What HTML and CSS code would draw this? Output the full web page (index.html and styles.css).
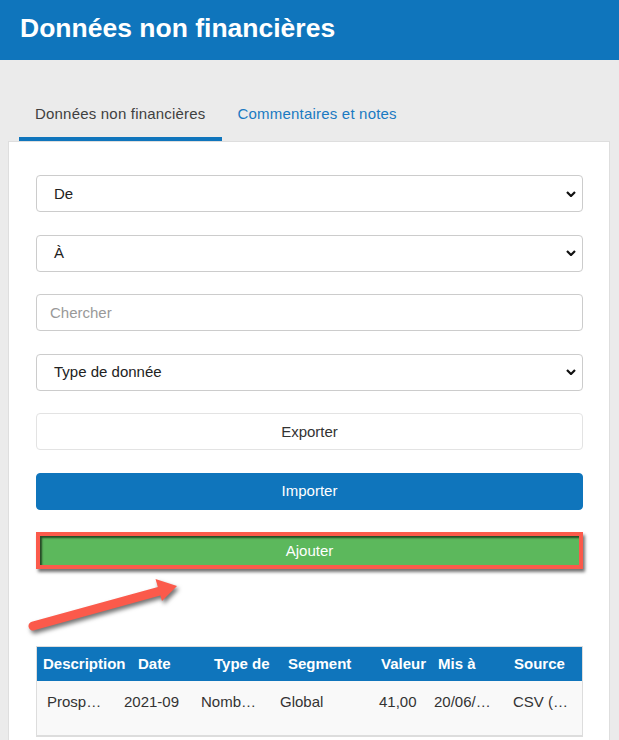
FILE: index.html
```html
<!DOCTYPE html>
<html lang="fr">
<head>
<meta charset="utf-8">
<title>Données non financières</title>
<link rel="stylesheet" href="styles.css">
</head>
<body>
<header class="topbar">
  <h1 class="title">Données non financières</h1>
</header>
<main class="page">
  <nav class="tabs">
    <a class="tab active">Données non financières</a>
    <a class="tab">Commentaires et notes</a>
  </nav>
  <section class="card">
    <div class="form">
      <div class="field"><span>De</span><svg class="chev" viewBox="0 0 10 6" width="10" height="6"><polyline points="1,1 5,5 9,1" fill="none" stroke="#111" stroke-width="2.2"/></svg></div>
      <div class="field"><span>À</span><svg class="chev" viewBox="0 0 10 6" width="10" height="6"><polyline points="1,1 5,5 9,1" fill="none" stroke="#111" stroke-width="2.2"/></svg></div>
      <input class="field search" type="text" placeholder="Chercher">
      <div class="field"><span>Type de donnée</span><svg class="chev" viewBox="0 0 10 6" width="10" height="6"><polyline points="1,1 5,5 9,1" fill="none" stroke="#111" stroke-width="2.2"/></svg></div>
      <button class="btn btn-export">Exporter</button>
      <button class="btn btn-import">Importer</button>
      <button class="btn btn-add">Ajouter</button>
    </div>
    <svg class="arrow" viewBox="20 570 170 70" width="170" height="70">
      <line x1="33" y1="626" x2="160" y2="591" stroke="#fb5a4b" stroke-width="9" stroke-linecap="round"/>
      <polygon points="155.5,579 177,586 162,601" fill="#fb5a4b"/>
    </svg>
    <div class="table">
      <div class="thead">
        <div class="th">Description</div>
        <div class="th">Date</div>
        <div class="th">Type de</div>
        <div class="th">Segment</div>
        <div class="th">Valeur</div>
        <div class="th">Mis à</div>
        <div class="th">Source</div>
      </div>
      <div class="trow">
        <div class="td">Prosp…</div>
        <div class="td">2021-09</div>
        <div class="td">Nomb…</div>
        <div class="td">Global</div>
        <div class="td">41,00</div>
        <div class="td">20/06/…</div>
        <div class="td">CSV (…</div>
      </div>
    </div>
  </section>
</main>
</body>
</html>
```

FILE: styles.css
```css
* { box-sizing: border-box; }
html, body { margin: 0; padding: 0; }
body {
  font-family: "Liberation Sans", Arial, sans-serif;
  background: #ebebeb;
  color: #333;
  width: 619px;
  overflow: hidden;
}
.topbar {
  height: 60px;
  background: #0f75bc;
  padding-left: 20px;
}
.title {
  margin: 0;
  font-size: 26.5px;
  line-height: 56px;
  font-weight: 700;
  color: #fff;
}
.page {
  padding: 34px 9px 0 8px;
}
.tabs {
  display: flex;
  margin-left: 11px;
}
.tab {
  padding: 10px 16px 13px;
  font-size: 15px;
  line-height: 20px;
  letter-spacing: 0.2px;
  border-bottom: 4px solid transparent;
  color: #1a7ac2;
  text-decoration: none;
}
.tab.active {
  color: #404040;
  border-bottom-color: #0f75bc;
}
.card {
  position: relative;
  background: #fff;
  border: 1px solid #dedede;
  padding: 33px 26px 40px 27px;
}
.form {
  display: flex;
  flex-direction: column;
  gap: 22.5px;
}
.field {
  height: 37px;
  width: 100%;
  border: 1px solid #ccc;
  border-radius: 4px;
  background: #fff;
  font-family: "Liberation Sans", Arial, sans-serif;
  font-size: 15px;
  line-height: 20px;
  color: #222;
  display: flex;
  align-items: center;
  justify-content: space-between;
  padding: 0 6px 0 17px;
  margin: 0;
}
.chev { display: block; }
.search {
  padding-left: 13px;
  outline: none;
}
.search::placeholder { color: #999; }
.btn {
  height: 37px;
  width: 100%;
  margin: 0;
  border-radius: 4px;
  font-family: "Liberation Sans", Arial, sans-serif;
  font-size: 15px;
  line-height: 20px;
  padding: 0;
}
.btn-export {
  background: #fff;
  border: 1px solid #e3e3e3;
  color: #333;
}
.btn-import {
  background: #0f75bc;
  border: 1px solid #0f75bc;
  color: #fff;
}
.btn-add {
  background: #5cb85c;
  color: #fff;
  border: 4px solid #fb5a4b;
  border-radius: 0;
  box-shadow: 2px 3px 3px rgba(0, 0, 0, 0.55), inset 2px 2px 2px rgba(0, 0, 0, 0.6);
}
.arrow {
  position: absolute;
  left: 11px;
  top: 428px;
  overflow: visible;
  filter: drop-shadow(2px 3px 2px rgba(0, 0, 0, 0.55));
}
.table {
  margin-top: 77px;
  border: 1px solid #ddd;
}
.thead, .trow {
  display: grid;
  grid-template-columns: 78px 77px 79px 99px 55px 79px 1fr;
}
.thead {
  background: #0f75bc;
  height: 34px;
}
.th {
  color: #fff;
  font-weight: 700;
  font-size: 15px;
  line-height: 34px;
  height: 34px;
  white-space: nowrap;
}
.th:nth-child(1) { padding-left: 6px; margin-right: -14px; }
.th:nth-child(2) { padding-left: 23px; }
.th:nth-child(3) { padding-left: 22px; margin-right: -4px; }
.th:nth-child(4) { padding-left: 17px; }
.th:nth-child(5) { padding-left: 11px; margin-right: -4px; }
.th:nth-child(6) { padding-left: 13px; }
.th:nth-child(7) { padding-left: 10px; }
.trow {
  height: 55px;
  background: #f9f9f9;
  border-bottom: 1px solid #ddd;
}
.td {
  font-size: 15px;
  line-height: 20px;
  padding: 11px 4px 0 9px;
  white-space: nowrap;
  color: #333;
}
.td:nth-child(1) { padding-left: 10px; }
.td:nth-child(5) { padding-right: 0; }
```
